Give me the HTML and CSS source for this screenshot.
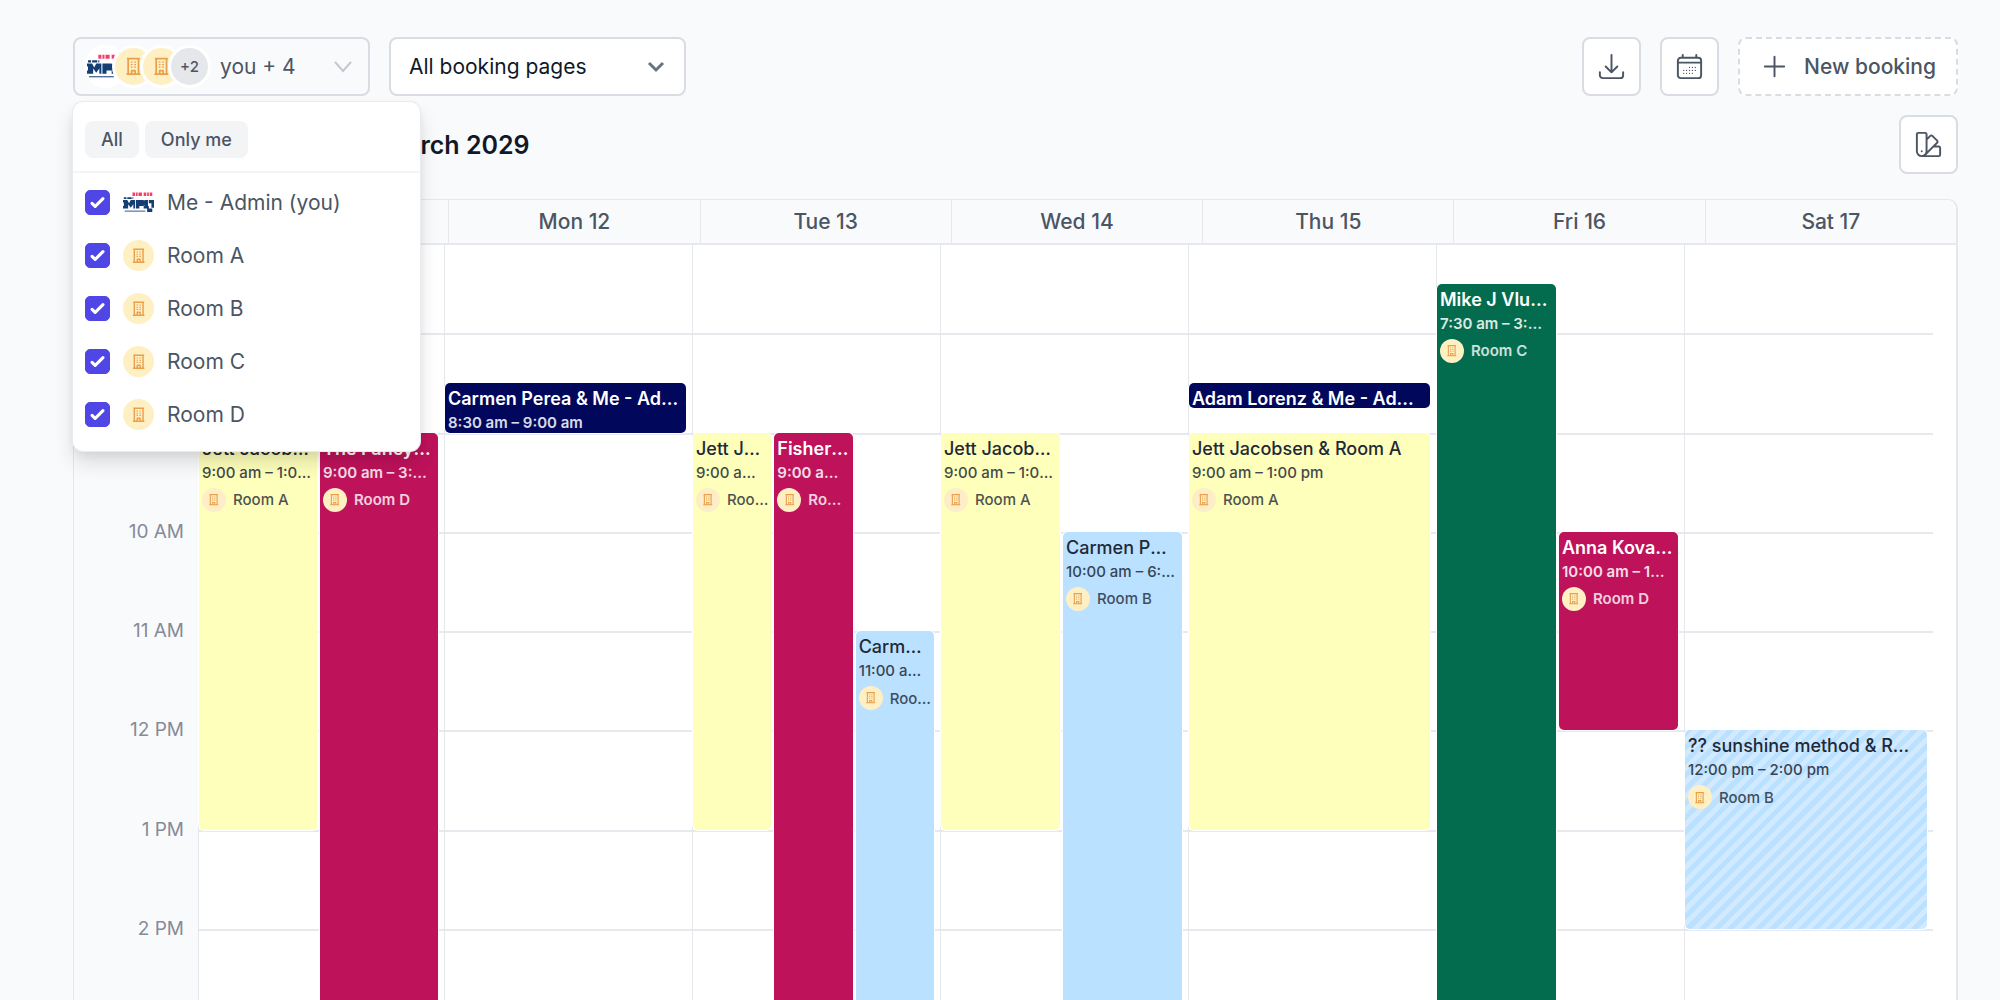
FILE: index.html
```
<!DOCTYPE html>
<html lang="en">
<head>
    <meta charset="UTF-8">
    <title>Bookings calendar</title>
    <link rel="stylesheet" href="styles.css">
</head>
<body>
    <!-- shared icons -->
    <svg class="sprite" aria-hidden="true">
        <symbol id="building" viewBox="0 0 24 24">
            <path fill="none" stroke="currentColor" stroke-width="2" stroke-linejoin="round" d="M6 3h12v18H6zM4 21h16M4.500 3h15M10 21v-4h4v4"/>
            <path fill="none" stroke="currentColor" stroke-width="1.500" d="M9 7h2m2 0h2M9 10h2m2 0h2M9 13h2m2 0h2"/>
        </symbol>
        <symbol id="logo" viewBox="0 0 36 36">
            <path fill="none" stroke="#f43f6e" stroke-width="4" stroke-dasharray="3 1 2 1 4 2" d="M11 8.500h23"/>
            <path fill="none" stroke="#153e75" stroke-width="2" stroke-dasharray="3 1 5 1" d="M1 13h11"/>
            <path fill="#153e75" d="M0 15h5l2 4 2-4h5v10h1V15h8c4 0 4 7 0 7h-4v3h-7v-5l-3 4-3-4v5H0v-3h1v-4H0zM25 15h4v7h1v3h-6v-3h1zM30 15h6v9h-3v-5h-3zM28 25h6v4h-6z"/>
            <path stroke="#153e75" stroke-width="1" d="M2 28h24"/>
        </symbol>
    </svg>

    <header class="toolbar">
        <div class="people">
            <button type="button" class="people-button" aria-expanded="true">
                <span class="stack">
                    <span class="avatar me"><svg><use href="#logo"/></svg></span>
                    <span class="avatar"><svg><use href="#building"/></svg></span>
                    <span class="avatar"><svg><use href="#building"/></svg></span>
                    <span class="avatar more">+2</span>
                </span>
                <span>you + 4</span>
                <svg class="chevron" viewBox="0 0 18 12"><path d="M1 1l8 9 8-9"/></svg>
            </button>

            <div class="menu">
                <div class="menu-top">
                    <button type="button">All</button>
                    <button type="button">Only me</button>
                </div>
                <div class="menu-list">
                    <label><input type="checkbox" checked><span class="avatar me"><svg><use href="#logo"/></svg></span>Me - Admin (you)</label>
                    <label><input type="checkbox" checked><span class="avatar"><svg><use href="#building"/></svg></span>Room A</label>
                    <label><input type="checkbox" checked><span class="avatar"><svg><use href="#building"/></svg></span>Room B</label>
                    <label><input type="checkbox" checked><span class="avatar"><svg><use href="#building"/></svg></span>Room C</label>
                    <label><input type="checkbox" checked><span class="avatar"><svg><use href="#building"/></svg></span>Room D</label>
                </div>
            </div>
        </div>

        <select class="pages" aria-label="Booking pages">
            <option>All booking pages</option>
        </select>

        <div class="actions">
            <button type="button" class="icon-button" aria-label="Download">
                <svg viewBox="0 0 24 24"><path d="M3 16.5v2.25A2.25 2.25 0 005.25 21h13.5A2.25 2.25 0 0021 18.75V16.5M16.5 12L12 16.5m0 0L7.5 12m4.5 4.5V3"/></svg>
            </button>
            <button type="button" class="icon-button" aria-label="Calendar">
                <svg viewBox="0 0 24 24"><path d="M6.75 3v2.25M17.25 3v2.25M3 18.75V7.5a2.25 2.25 0 012.25-2.25h13.5A2.25 2.25 0 0121 7.5v11.25m-18 0A2.25 2.25 0 005.25 21h13.5A2.25 2.25 0 0021 18.75m-18 0V7.5M3 9h18"/><path class="dots" d="M12 12.75h.01M14.25 12.75h.01M16.5 12.75h.01M7.5 15h.01M9.75 15h.01M12 15h.01M14.25 15h.01M16.5 15h.01M7.5 17.25h.01M9.75 17.25h.01M12 17.25h.01M14.25 17.25h.01"/></svg>
            </button>
            <button type="button" class="new-booking">
                <svg viewBox="0 0 24 24"><path d="M12 4.5v15m7.5-7.5h-15"/></svg>
                New booking
            </button>
        </div>
    </header>

    <div class="title-row">
        <h1>March 2029</h1>
        <button type="button" class="icon-button" aria-label="Colors">
            <svg viewBox="0 0 24 24"><path d="M4.098 19.902a3.75 3.75 0 005.304 0l6.401-6.402M6.75 21A3.75 3.75 0 013 17.25V4.125C3 3.504 3.504 3 4.125 3h5.25c.621 0 1.125.504 1.125 1.125v4.072M6.75 21a3.75 3.75 0 003.75-3.75V8.197M6.75 21h13.125c.621 0 1.125-.504 1.125-1.125v-5.25c0-.621-.504-1.125-1.125-1.125h-4.072M10.5 8.197l2.88-2.88c.438-.439 1.15-.439 1.59 0l3.712 3.713c.44.44.44 1.152 0 1.59l-2.879 2.88M6.75 17.25h.008v.008H6.75v-.008z"/></svg>
        </button>
    </div>

    <main class="calendar">
        <div class="week-head">
            <span></span>
            <span>Sun 11</span>
            <span>Mon 12</span>
            <span>Tue 13</span>
            <span>Wed 14</span>
            <span>Thu 15</span>
            <span>Fri 16</span>
            <span>Sat 17</span>
        </div>

        <div class="week-body">
            <div class="week">
                <div class="times">
                    <span></span><span>8 AM</span><span>9 AM</span><span>10 AM</span><span>11 AM</span>
                    <span>12 PM</span><span>1 PM</span><span>2 PM</span>
                </div>
                <div class="lines">
                    <i></i><i></i><i></i><i></i><i></i><i></i><i></i><i></i>
                </div>

                <div class="day sun two">
                    <article class="event yellow from-9 to-1pm">
                        <h2>Jett Jacobsen &amp; Room A</h2>
                        <p>9:00 am – 1:00 pm</p>
                        <div class="room"><span class="avatar"><svg><use href="#building"/></svg></span><span>Room A</span></div>
                    </article>
                    <article class="event pink from-9 to-end">
                        <h2>The Fancy Company &amp; Room D</h2>
                        <p>9:00 am – 3:00 pm</p>
                        <div class="room"><span class="avatar"><svg><use href="#building"/></svg></span><span>Room D</span></div>
                    </article>
                </div>

                <div class="day mon">
                    <article class="event navy from-830 half">
                        <h2>Carmen Perea &amp; Me - Admin</h2>
                        <p>8:30 am – 9:00 am</p>
                    </article>
                </div>

                <div class="day tue three">
                    <article class="event yellow from-9 to-1pm">
                        <h2>Jett Jacobsen &amp; Room A</h2>
                        <p>9:00 am – 1:00 pm</p>
                        <div class="room"><span class="avatar"><svg><use href="#building"/></svg></span><span>Room A</span></div>
                    </article>
                    <article class="event pink from-9 to-end">
                        <h2>Fisher &amp; Room D</h2>
                        <p>9:00 am – 5:00 pm</p>
                        <div class="room"><span class="avatar"><svg><use href="#building"/></svg></span><span>Room D</span></div>
                    </article>
                    <article class="event blue from-11 to-end">
                        <h2>Carmen Perea &amp; Room B</h2>
                        <p>11:00 am – 5:00 pm</p>
                        <div class="room"><span class="avatar"><svg><use href="#building"/></svg></span><span>Room B</span></div>
                    </article>
                </div>

                <div class="day wed two">
                    <article class="event yellow from-9 to-1pm">
                        <h2>Jett Jacobsen &amp; Room A</h2>
                        <p>9:00 am – 1:00 pm</p>
                        <div class="room"><span class="avatar"><svg><use href="#building"/></svg></span><span>Room A</span></div>
                    </article>
                    <article class="event blue from-10 to-end">
                        <h2>Carmen Perea &amp; Room B</h2>
                        <p>10:00 am – 6:00 pm</p>
                        <div class="room"><span class="avatar"><svg><use href="#building"/></svg></span><span>Room B</span></div>
                    </article>
                </div>

                <div class="day thu">
                    <article class="event navy from-830 quarter">
                        <h2>Adam Lorenz &amp; Me - Admin</h2>
                    </article>
                    <article class="event yellow from-9 to-1pm">
                        <h2>Jett Jacobsen &amp; Room A</h2>
                        <p>9:00 am – 1:00 pm</p>
                        <div class="room"><span class="avatar"><svg><use href="#building"/></svg></span><span>Room A</span></div>
                    </article>
                </div>

                <div class="day fri two">
                    <article class="event green from-730 to-end">
                        <h2>Mike J Vluggen &amp; Room C</h2>
                        <p>7:30 am – 3:30 pm</p>
                        <div class="room"><span class="avatar"><svg><use href="#building"/></svg></span><span>Room C</span></div>
                    </article>
                    <article class="event pink from-10 to-12pm">
                        <h2>Anna Kovacs &amp; Room D</h2>
                        <p>10:00 am – 12:00 pm</p>
                        <div class="room"><span class="avatar"><svg><use href="#building"/></svg></span><span>Room D</span></div>
                    </article>
                </div>

                <div class="day sat">
                    <article class="event blue tentative from-12pm to-2pm">
                        <h2>?? sunshine method &amp; Room B</h2>
                        <p>12:00 pm – 2:00 pm</p>
                        <div class="room"><span class="avatar"><svg><use href="#building"/></svg></span><span>Room B</span></div>
                    </article>
                </div>
            </div>
        </div>
    </main>
</body>
</html>
```

FILE: styles.css
```
* {
    box-sizing: border-box;
}
body {
    display: flex;
    flex-direction: column;
    height: 100vh;
    margin: 0;
    padding: 37px 42px 0 73px;
    overflow: hidden;
    background: #f9fafc;
    color: #4b5563;
    font-family: Inter, sans-serif;
    font-size: 21px;
}
button, select {
    color: inherit;
    font: inherit;
    cursor: pointer;
}
h1, h2, p {
    margin: 0;
}
.sprite {
    display: none;
}

/* toolbar */
.toolbar {
    display: flex;
    gap: 19px;
}
.people {
    position: relative;
}
.people-button {
    display: flex;
    align-items: center;
    gap: 9px;
    width: 297px;
    height: 59px;
    padding: 0 16px 0 9px;
    border: 2px solid #d9dce3;
    border-radius: 8px;
    background: #f9fafc;
}
.chevron {
    width: 18px;
    height: 12px;
    margin-left: auto;
    fill: none;
    stroke: #c3c7ce;
    stroke-width: 2;
}
.stack {
    display: flex;
}
.avatar {
    display: flex;
    flex: none;
    align-items: center;
    justify-content: center;
    width: 31px;
    height: 31px;
    border-radius: 50%;
    background: #fef0c3;
    color: #e8a04c;
}
.avatar svg {
    width: 56%;
    height: 56%;
}
.avatar.me {
    background: #fff;
}
.avatar.me svg {
    width: 100%;
    height: 100%;
}
.stack .avatar {
    width: 43px;
    height: 43px;
    border: 3px solid #fff;
}
.stack .avatar + .avatar {
    margin-left: -15px;
}
.stack .more {
    background: #e5e7eb;
    color: #4b5563;
    font-size: 15px;
    font-weight: 500;
}
.pages {
    width: 297px;
    height: 59px;
    padding: 0 18px;
    border: 2px solid #d9dce3;
    border-radius: 8px;
    appearance: none;
    background: #fff url("data:image/svg+xml,%3Csvg xmlns='http://www.w3.org/2000/svg' width='18' height='12' fill='none' stroke='%236b7280' stroke-width='3'%3E%3Cpath d='M2 2l7 7 7-7'/%3E%3C/svg%3E") no-repeat right 19px center;
    color: #111827;
}
.actions {
    display: flex;
    gap: 19px;
    margin-left: auto;
}
.icon-button, .new-booking {
    display: flex;
    align-items: center;
    justify-content: center;
    width: 59px;
    height: 59px;
    padding: 0;
    border: 2px solid #d9dce3;
    border-radius: 8px;
    background: #fff;
}
.icon-button svg, .new-booking svg {
    width: 31px;
    height: 31px;
    fill: none;
    stroke: currentColor;
    stroke-width: 1.5;
    stroke-linecap: round;
    stroke-linejoin: round;
}
.icon-button .dots {
    stroke-width: 1;
}
.new-booking {
    gap: 14px;
    width: auto;
    padding: 0 20px 0 19px;
    border-style: dashed;
    font-weight: 500;
}

/* people menu */
.menu {
    position: absolute;
    z-index: 10;
    top: 65px;
    left: 0;
    width: 347px;
    border-radius: 10px;
    background: #fff;
    box-shadow: 0 0 0 1px #e9ebee, 0 12px 20px rgba(0, 0, 0, 0.12), 0 4px 8px rgba(0, 0, 0, 0.06);
}
.menu-top {
    display: flex;
    gap: 6px;
    padding: 19px 12px 13px;
    border-bottom: 2px solid #f3f4f6;
}
.menu-top button {
    height: 37px;
    padding: 0 16px;
    border: 0;
    border-radius: 8px;
    background: #f3f4f6;
    font-size: 18px;
    font-weight: 500;
}
.menu-list {
    padding: 3px 12px 10px;
}
.menu-list label {
    display: flex;
    align-items: center;
    height: 53px;
    gap: 13px;
}
.menu-list input {
    width: 25px;
    height: 25px;
    margin: 0;
    border-radius: 5px;
    appearance: none;
    border: 1px solid #d1d5db;
}
.menu-list input:checked {
    border-color: #4f46e5;
    background: #4f46e5 url("data:image/svg+xml,%3Csvg xmlns='http://www.w3.org/2000/svg' viewBox='0 0 16 16' fill='%23fff'%3E%3Cpath d='M12.207 4.793a1 1 0 010 1.414l-5 5a1 1 0 01-1.414 0l-2-2a1 1 0 011.414-1.414L6.5 9.086l4.293-4.293a1 1 0 011.414 0z'/%3E%3C/svg%3E") center / 25px;
}

/* title */
.title-row {
    display: flex;
    align-items: center;
    justify-content: space-between;
    margin: 19px 0 25px;
    padding-left: 310px;
}
h1 {
    color: #111827;
    font-size: 25px;
    font-weight: 600;
}

/* calendar */
.calendar {
    display: flex;
    flex: 1;
    flex-direction: column;
    min-height: 0;
    border: 1px solid #e5e7eb;
    border-right-width: 2px;
    border-bottom: 0;
    border-radius: 10px 10px 0 0;
    background: #fff;
    overflow: hidden;
}
.week-head {
    display: grid;
    grid-template-columns: 123px repeat(7, minmax(0, 1fr));
    height: 45px;
    border-bottom: 2px solid #e8e9ee;
    background: #f9fafc;
    font-weight: 500;
    line-height: 43px;
    text-align: center;
}
.week-head span + span {
    border-left: 1px solid #e5e7eb;
}
.week-body {
    flex: 1;
    min-height: 0;
    overflow: hidden;
}
/* scrolled a little past 7 AM */
.week {
    display: grid;
    grid-template-columns: 125px minmax(0, 246fr) repeat(6, minmax(0, 248fr)) 23px;
    grid-template-rows: minmax(0, 1fr);
    height: 794px;
    margin-top: -11px;
}
.times, .lines {
    display: grid;
    grid-template-rows: repeat(8, minmax(0, 1fr));
    grid-row: 1;
}
.times {
    grid-column: 1;
    padding-right: 14px;
    border-right: 1px solid #e5e7eb;
    background: #f9fafc;
    color: #858b98;
    font-size: 19px;
    line-height: 24px;
    text-align: right;
}
.times span {
    margin-top: -12px;
}
.lines {
    grid-column: 2 / 9;
}
.lines i {
    border-top: 2px solid #e8e9ee;
}
.day {
    display: grid;
    grid-row: 1;
    grid-template-columns: minmax(0, 1fr);
    grid-template-rows: repeat(32, minmax(0, 1fr));
    column-gap: 3px;
    padding-right: 6px;
    border-right: 1px solid #e5e7eb;
}
.two {
    grid-template-columns: repeat(2, minmax(0, 1fr));
}
.three {
    grid-template-columns: repeat(3, minmax(0, 1fr));
}
.sun { grid-column: 2; }
.mon { grid-column: 3; }
.tue { grid-column: 4; }
.wed { grid-column: 5; }
.thu { grid-column: 6; }
.fri { grid-column: 7; }
.sat { grid-column: 8; border-right: 0; }

/* one row is 15 minutes, row 1 is 7 AM */
.from-730 { grid-row-start: 3; }
.from-830 { grid-row-start: 7; }
.from-9 { grid-row-start: 9; }
.from-10 { grid-row-start: 13; }
.from-11 { grid-row-start: 17; }
.from-12pm { grid-row-start: 21; }
.to-12pm { grid-row-end: 21; }
.to-1pm { grid-row-end: 25; }
.to-2pm { grid-row-end: 29; }
.to-end { grid-row-end: 33; }
.quarter { grid-row-end: span 1; }
.half { grid-row-end: span 2; }

.event {
    padding: 4px 3px 0;
    border-radius: 5px;
    box-shadow: 0 0 0 1px #fff;
    overflow: hidden;
}
.event:nth-child(2) {
    grid-column-start: 2;
}
.event:nth-child(3) {
    grid-column-start: 3;
}
.thu .event {
    grid-column-start: 1;
}
.to-end {
    border-radius: 5px 5px 0 0;
}
.event h2, .event p, .room span:last-child {
    overflow: hidden;
    text-overflow: ellipsis;
    white-space: nowrap;
}
.event h2 {
    font-size: 18px;
    font-weight: 500;
    line-height: 24px;
}
.event p {
    padding-right: 3px;
    font-size: 15px;
    font-weight: 500;
    line-height: 24px;
    opacity: 0.85;
}
.room {
    display: flex;
    align-items: center;
    gap: 7px;
    margin-top: 3px;
    font-size: 15px;
    font-weight: 500;
}
.room span:last-child {
    opacity: 0.8;
}
.room .avatar {
    width: 24px;
    height: 24px;
}
.yellow {
    background: #feffba;
    color: #1f2937;
}
.yellow .avatar {
    background: #feeec8;
}
.blue {
    background: #bae1ff;
    color: #1f2937;
}
.blue h2 {
    padding-right: 5px;
}
.yellow .room, .blue .room {
    margin-right: -3px;
}
.pink {
    background: #be125a;
    color: #fff;
}
.green {
    background: #046c4e;
    color: #fff;
}
.navy {
    background: #01085c;
    color: #fff;
}
.pink h2, .green h2, .navy h2,
.pink p, .green p, .navy p,
.pink .room, .green .room {
    font-weight: 600;
}
.tentative {
    background: repeating-linear-gradient(135deg, #bae1ff 0 5px, #d1eaff 5px 10px);
}
```
